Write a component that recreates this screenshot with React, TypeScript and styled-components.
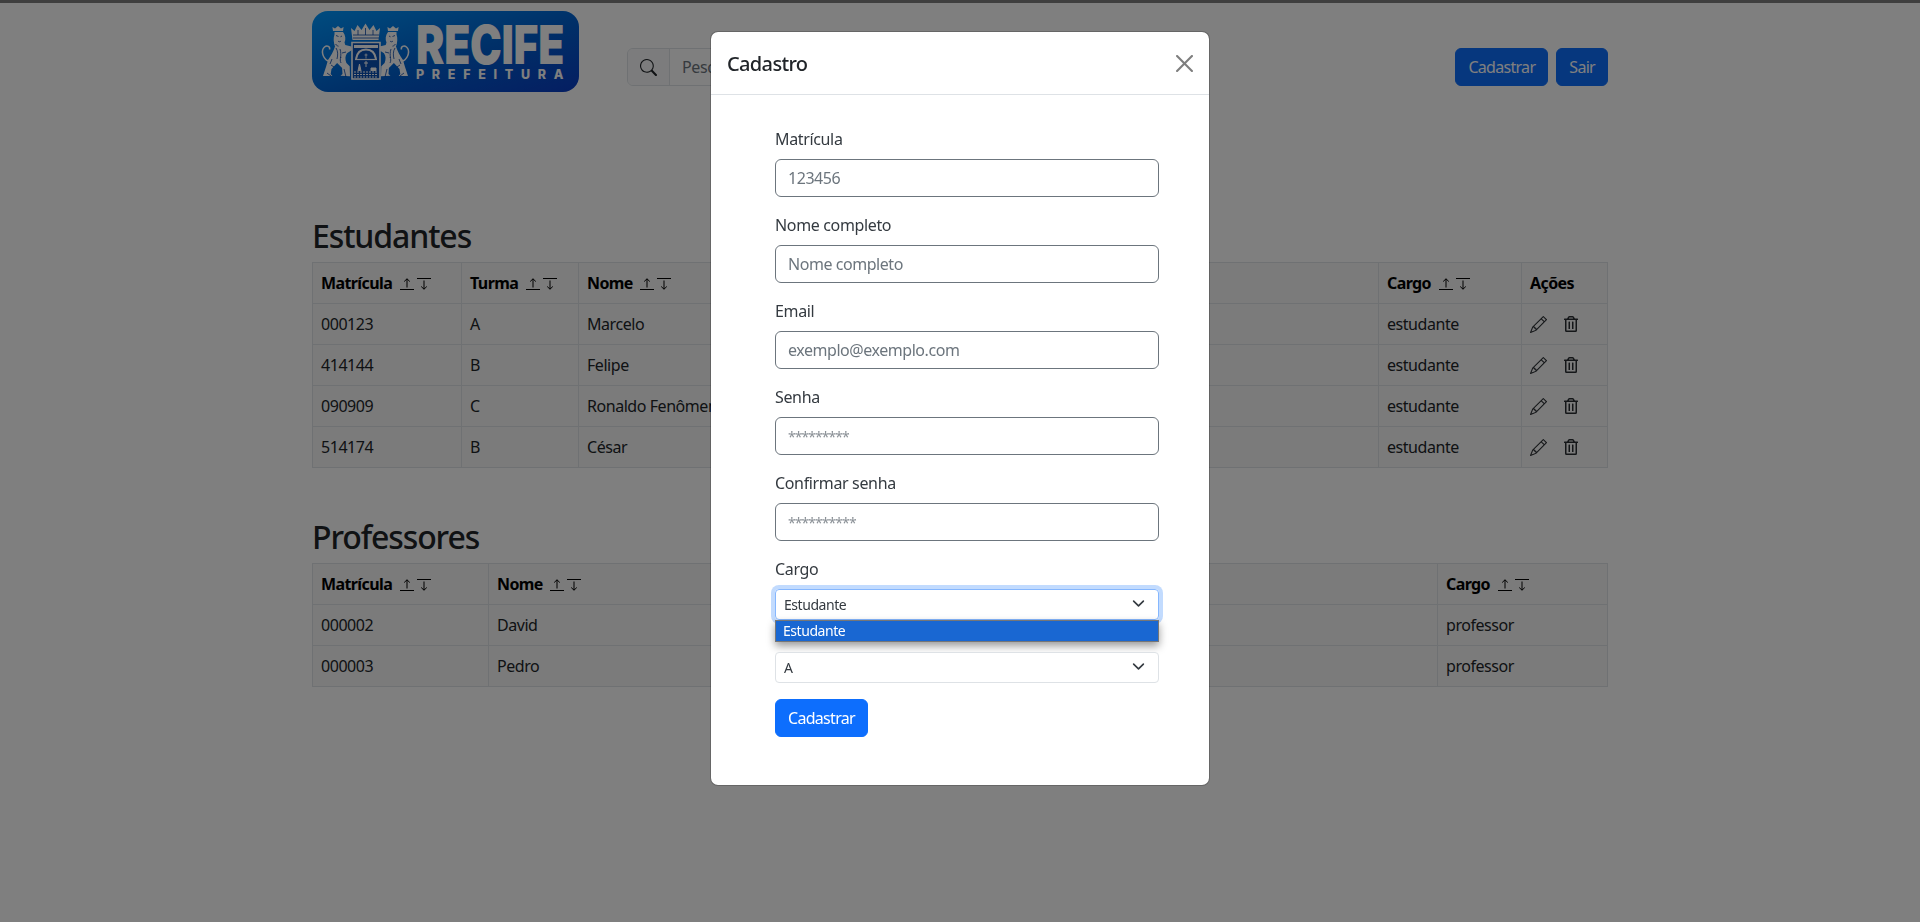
import React from "react";
import styled, { createGlobalStyle } from "styled-components";
import { BsPencil } from "react-icons/bs";
import { FaRegTrashAlt } from "react-icons/fa";

const Global = createGlobalStyle`
  * { box-sizing: border-box; }
  html, body { margin: 0; padding: 0; height: 100%; overflow: hidden; background: #fff; }
  body { font-family: "Noto Sans", "Open Sans", sans-serif; font-size: 16px; line-height: 24px; color: #212529; letter-spacing: -0.35px; }
`;

const TopLine = styled.div`height: 3px; background: #7f7f7f;`;
const Page = styled.div`width: 1320px; margin: 0 auto; padding: 8px 12px 0;`;
const Header = styled.header`display: flex; align-items: flex-start; margin-bottom: 125px;`;
const LogoBox = styled.svg`display: block; width: 267px; height: 81px; flex: none;`;
const Search = styled.div`display: flex; width: 400px; height: 38px; margin: 37px 0 0 48px; border: 1px solid #dee2e6; border-radius: 6px; overflow: hidden;`;
const SearchAddon = styled.span`display: flex; align-items: center; justify-content: center; width: 42px; flex: none; background: #f8f9fa; border-right: 1px solid #dee2e6;`;
const SearchInput = styled.input`flex: 1; min-width: 0; border: 0; padding: 0 12px; font: inherit; letter-spacing: inherit; outline: 0; &::placeholder { color: #6c757d; }`;
const HeaderActions = styled.div`display: flex; gap: 8px; margin: 37px 0 0 auto;`;
const Button = styled.button`height: 38px; padding: 0 12px; border: 1px solid #0d6efd; border-radius: 6px; background: #0d6efd; color: #fff; font: inherit; letter-spacing: -0.7px;`;

const Title = styled.h2<{ $top?: number; $after?: number }>`margin: ${(p) => p.$top ?? 0}px 0 ${(p) => p.$after ?? 7}px; font-size: 32px; line-height: 38.4px; font-weight: 500; letter-spacing: -1.1px;`;
const Table = styled.table`width: 100%; table-layout: fixed; border-collapse: collapse; background: #f6f6f6; color: #212529; letter-spacing: -0.45px;`;
const Th = styled.th<{ $w?: number }>`width: ${(p) => (p.$w ? `${p.$w}px` : "auto")}; padding: 8px; border: 1px solid #dee2e6; text-align: left; font-weight: 700; color: #000; white-space: nowrap; line-height: 24px; letter-spacing: -0.6px;`;
const Td = styled.td`padding: 8px; border: 1px solid #dee2e6; white-space: nowrap; line-height: 24px; overflow: hidden;`;
const SortIcons = styled.span`display: inline-flex; gap: 3px; margin-left: 4px; vertical-align: -1px;`;
const Actions = styled.span`display: flex; align-items: center; gap: 16px; height: 24px; color: #2b2f33;`;

const Overlay = styled.div`position: fixed; inset: 0; display: flex; justify-content: center; align-items: flex-start; padding-top: 31px; background: rgba(0, 0, 0, 0.5);`;
const Modal = styled.div`width: 500px; height: 755px; background: #fff; border: 1px solid rgba(0, 0, 0, 0.2); border-radius: 8px; background-clip: padding-box;`;
const ModalHead = styled.div`display: flex; align-items: center; justify-content: space-between; height: 63px; padding: 2px 16px 0; border-bottom: 1px solid #dee2e6;`;
const ModalTitle = styled.h5`margin: 0; font-size: 20px; line-height: 30px; font-weight: 500; letter-spacing: -0.65px;`;
const Close = styled.button`display: flex; padding: 0; margin-top: -2px; border: 0; background: none; opacity: 0.5;`;
const Form = styled.form`padding: 32px 50px 0 64px;`;
const Field = styled.div<{ $after?: number }>`position: relative; margin-bottom: ${(p) => p.$after ?? 16}px;`;
const Label = styled.label`display: block; margin-bottom: 8px; color: #343a40;`;
const Input = styled.input<{ $stars?: boolean }>`display: block; width: 100%; height: 38px; padding: 0 12px; border: 1px solid #6c757d; border-radius: 6px; font: inherit; outline: 0;
  font-size: ${(p) => (p.$stars ? "14px" : "16px")};
  letter-spacing: ${(p) => (p.$stars ? "-0.95px" : "-0.45px")};
  &::placeholder { color: ${(p) => (p.$stars ? "#8a9096" : "#6c757d")}; opacity: 1; }`;
const SelectBox = styled.div<{ $open?: boolean }>`position: relative; height: 31px; border-radius: 4px; ${(p) => p.$open ? "box-shadow: 0 0 0 4px rgba(13,110,253,.25);" : ""}`;
const Select = styled.select<{ $open?: boolean }>`display: block; width: 100%; height: 31px; padding: 0 36px 0 8px; appearance: none; background: #fff; border: 1px solid ${(p) => (p.$open ? "#86b7fe" : "#dee2e6")}; border-radius: 4px; color: #343a40; font: inherit; font-size: 14px; letter-spacing: -0.45px; outline: 0;`;
const Chevron = styled.svg`position: absolute; top: 9px; right: 14px; width: 13px; height: 11px; pointer-events: none;`;
const DropList = styled.div`position: absolute; top: 31px; left: 0; right: 0; height: 22px; padding-left: 7px; background: #1967d2; border: 1px solid #767676; color: #fff; font-size: 14px; line-height: 20px; letter-spacing: -0.45px; box-shadow: 0 4px 9px rgba(0, 0, 0, 0.4);`;

const Sort = () => (
  <SortIcons>
    <svg width="14" height="12" viewBox="0 0 14 12" fill="none" stroke="currentColor" strokeWidth="1">
      <path d="M0 11.500h14M7 9.500V.8M4.200 3.500 7 .8l2.800 2.700" />
    </svg>
    <svg width="14" height="12" viewBox="0 0 14 12" fill="none" stroke="currentColor" strokeWidth="1">
      <path d="M0 .5h14M7 2.500v8.700M4.200 8.500 7 11.200l2.800-2.700" />
    </svg>
  </SortIcons>
);

const Lion = () => (
  <g>
    <path d="M21 20l-.6-4 2.600 1.600L26 15l3 2.600 2.600-1.600-.6 4z" fill="#fff" />
    <path d="M22.500 21h8.500c2.500 3 3 7.500 1.500 10.500l.8 2.500 6.200 1.500.5 3.500-5 3.200c-2 3-2 6-.6 9.800l3.300 3.200.3 10-9.500-.4 2-1.900-.4-6-5-4.800-5.600 6-.8 5 1.600 2H11l3.200-9.800 1.800-6.200c3-4 5.500-9 7-13.500-1.500-4-1.800-9-.5-12.200z" fill="#fff" />
    <path d="M16 50c-6-3.500-7-11-3.500-14 2.700-2.200 6-.3 5 2.500" fill="none" stroke="#fff" strokeWidth="1.500" />
    <path d="M24 24.500l2.500 1M30 25l-1.500.8M26 30c1 1 2 1 3 0M23.500 33c1 1.500 2 2 3 2.200M24 37c2 3 2 7 1 11M28 38c1 3 1 6 .5 9M29 46c-1 2-1 4 0 6M34 41l-4 1M19 54l3 2M20 48l-2 5M32 58l2 8M15 62l4 3" fill="none" stroke="#0a46a8" strokeWidth="0.800" />
  </g>
);

const Logo = () => (
  <LogoBox viewBox="0 0 267 81" role="img" aria-label="Recife Prefeitura">
    <defs>
      <linearGradient id="logoBg" x1="0" y1="0" x2="1" y2="1">
        <stop offset="0" stopColor="#0098ff" />
        <stop offset="0.55" stopColor="#0060d0" />
        <stop offset="1" stopColor="#0a3cc4" />
      </linearGradient>
    </defs>
    <rect width="267" height="81" rx="16" fill="url(#logoBg)" />
    <Lion />
    <g transform="translate(107 0) scale(-1 1)"><Lion /></g>
    <path d="M39 17l3.500 3 3-6 4 5 4-6.500 4 6.500 4-5 3 6 3.500-3-1.500 12H40.500z" fill="#fff" />
    <path d="M41 24h26M41 27h26M46 19v5M53.500 17v7M61 19v5" stroke="#0a46a8" strokeWidth="0.800" />
    <path d="M40 31.500h28V68H40z" fill="#0a50b4" stroke="#fff" strokeWidth="1.600" />
    <path d="M42 34h24v3H42z" fill="#fff" />
    <path d="M44 48c1-6.500 5-9.500 10-9.500s9 3 10 9.500" fill="none" stroke="#fff" strokeWidth="2" />
    <path d="M43 48.500h22" stroke="#fff" strokeWidth="1.200" />
    <path d="M54 42.500v5M52.500 44h3" stroke="#fff" strokeWidth="0.800" />
    <path d="M54 50v6M52 52h4" stroke="#fff" strokeWidth="1" />
    <path d="M46 60l1.500-7 1.500 7M59 60v-3h5v3" fill="#fff" stroke="#fff" strokeWidth="1" />
    <path d="M42 61h24M42 63.500h24M42 66h24" stroke="#fff" strokeWidth="1" strokeDasharray="2 1" />
    <text x="104" y="52.500" textLength="148" lengthAdjust="spacingAndGlyphs" fill="#fff" fontFamily="Inter, sans-serif" fontWeight="900" fontSize="54">RECIFE</text>
    <text x="104" y="68" textLength="147" lengthAdjust="spacing" fill="#fff" fontFamily="Inter, sans-serif" fontWeight="800" fontSize="12.500">PREFEITURA</text>
  </LogoBox>
);

const students = [
  ["000123", "A", "Marcelo"],
  ["414144", "B", "Felipe"],
  ["090909", "C", "Ronaldo Fenômeno"],
  ["514174", "B", "César"],
];
const teachers = [["000002", "David"], ["000003", "Pedro"]];

export default function App() {
  return (
    <>
      <Global />
      <TopLine />
      <Page>
        <Header>
          <Logo />
          <Search>
            <SearchAddon>
              <svg width="17" height="17" viewBox="0 0 16 16" fill="#212529">
                <path d="M11.742 10.344a6.500 6.500 0 1 0-1.397 1.398h-.001c.03.04.062.078.098.115l3.850 3.850a1 1 0 0 0 1.415-1.414l-3.850-3.850a1.007 1.007 0 0 0-.115-.1zM12 6.500a5.500 5.500 0 1 1-11 0 5.500 5.500 0 0 1 11 0z" />
              </svg>
            </SearchAddon>
            <SearchInput placeholder="Pesquisar..." />
          </Search>
          <HeaderActions>
            <Button>Cadastrar</Button>
            <Button>Sair</Button>
          </HeaderActions>
        </Header>

        <Title>Estudantes</Title>
        <Table>
          <thead>
            <tr>
              <Th $w={149}>Matrícula <Sort /></Th>
              <Th $w={117}>Turma <Sort /></Th>
              <Th $w={250}>Nome <Sort /></Th>
              <Th>Email <Sort /></Th>
              <Th $w={143}>Cargo <Sort /></Th>
              <Th $w={86}>Ações</Th>
            </tr>
          </thead>
          <tbody>
            {students.map((s) => (
              <tr key={s[0]}>
                <Td>{s[0]}</Td>
                <Td>{s[1]}</Td>
                <Td>{s[2]}</Td>
                <Td />
                <Td>estudante</Td>
                <Td>
                  <Actions>
                    <BsPencil size={17} />
                    <FaRegTrashAlt size={16} />
                  </Actions>
                </Td>
              </tr>
            ))}
          </tbody>
        </Table>

        <Title $top={50} $after={6}>Professores</Title>
        <Table>
          <thead>
            <tr>
              <Th $w={176}>Matrícula <Sort /></Th>
              <Th $w={300}>Nome <Sort /></Th>
              <Th>Email <Sort /></Th>
              <Th $w={170}>Cargo <Sort /></Th>
            </tr>
          </thead>
          <tbody>
            {teachers.map((t) => (
              <tr key={t[0]}>
                <Td>{t[0]}</Td>
                <Td>{t[1]}</Td>
                <Td />
                <Td>professor</Td>
              </tr>
            ))}
          </tbody>
        </Table>
      </Page>

      <Overlay>
        <Modal>
          <ModalHead>
            <ModalTitle>Cadastro</ModalTitle>
            <Close aria-label="Fechar">
              <svg width="17" height="17" viewBox="0 0 16 16" fill="#000">
                <path d="M.293.293a1 1 0 0 1 1.414 0L8 6.586 14.293.293a1 1 0 1 1 1.414 1.414L9.414 8l6.293 6.293a1 1 0 0 1-1.414 1.414L8 9.414l-6.293 6.293a1 1 0 0 1-1.414-1.414L6.586 8 .293 1.707a1 1 0 0 1 0-1.414z" />
              </svg>
            </Close>
          </ModalHead>
          <Form>
            <Field><Label>Matrícula</Label><Input placeholder="123456" /></Field>
            <Field><Label>Nome completo</Label><Input placeholder="Nome completo" /></Field>
            <Field><Label>Email</Label><Input placeholder="exemplo@exemplo.com" /></Field>
            <Field><Label>Senha</Label><Input $stars placeholder="*********" /></Field>
            <Field><Label>Confirmar senha</Label><Input $stars placeholder="**********" /></Field>
            <Field $after={32}>
              <Label>Cargo</Label>
              <SelectBox $open>
                <Select $open defaultValue="Estudante"><option>Estudante</option></Select>
                <Chevron viewBox="0 0 16 12" fill="none" stroke="#343a40" strokeWidth="2" strokeLinecap="round" strokeLinejoin="round"><path d="M2 3l6 6 6-6" /></Chevron>
                <DropList>Estudante</DropList>
              </SelectBox>
            </Field>
            <Field>
              <SelectBox>
                <Select defaultValue="A"><option>A</option></Select>
                <Chevron viewBox="0 0 16 12" fill="none" stroke="#343a40" strokeWidth="2" strokeLinecap="round" strokeLinejoin="round"><path d="M2 3l6 6 6-6" /></Chevron>
              </SelectBox>
            </Field>
            <Button type="button">Cadastrar</Button>
          </Form>
        </Modal>
      </Overlay>
    </>
  );
}
